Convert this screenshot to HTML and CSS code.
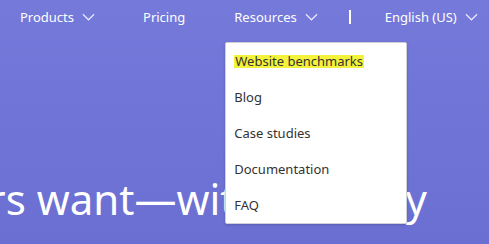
FILE: index.html
```html
<!DOCTYPE html>
<html>
<head>
<title>Resources</title>
<meta charset="UTF-8">
<meta name="viewport" content="width=device-width, initial-scale=1.0">
<link rel="stylesheet" href="styles.css">
</head>
<body>

<!-- *********************************************************
TOP NAV
********************************************************** -->

<div class="hero">
	<div class="nav">
		<div class="nav-item products">Products <svg class="chev" viewBox="0 0 14 8"><path d="M1 1l6 6 6-6"/></svg></div>
		<div class="nav-item pricing">Pricing</div>
		<div class="nav-item resources">
			Resources <svg class="chev" viewBox="0 0 14 8"><path d="M1 1l6 6 6-6"/></svg>
			<div class="menu">
				<div class="menu-item"><span class="marker">Website benchmarks</span></div>
				<div class="menu-item">Blog</div>
				<div class="menu-item">Case studies</div>
				<div class="menu-item">Documentation</div>
				<div class="menu-item">FAQ</div>
			</div>
		</div>
		<div class="sep"></div>
		<div class="nav-item lang">English (US) <svg class="chev" viewBox="0 0 14 8"><path d="M1 1l6 6 6-6"/></svg></div>
	</div>

	<h1 class="headline">what users want—with security</h1>
</div>

</body>
</html>
```

FILE: styles.css
```css
body{
	margin: 0px;
	font-family: "Noto Sans", "Open Sans", sans-serif;
	color: #333;
	overflow: hidden;
}

/*********************************************************
HERO
**********************************************************/

.hero{
	height: 244px;
	background: linear-gradient(180deg, #7479da 0%, #6b6fd2 100%);
	overflow: hidden;
}

.nav{
	display: flex;
	align-items: center;
	height: 34px;
	padding-left: 20px;
	color: #fff;
	font-size: 13px;
	line-height: 18px;
}

.nav-item{
	position: relative;
	display: flex;
	align-items: center;
	white-space: nowrap;
}

.chev{
	width: 13px;
	height: 8px;
	margin-left: 8px;
	fill: none;
	stroke: #e8e9fb;
	stroke-width: 1.3;
}

.pricing{ margin-left: 48px; }
.resources{ margin-left: 49px; }
.lang{ margin-left: 34px; }

.sep{
	width: 2px;
	height: 14px;
	background: #fff;
	margin-left: 31px;
}

/*********************************************************
DROPDOWN
**********************************************************/

.menu{
	position: absolute;
	top: 34px;
	left: -9px;
	width: 180px;
	background: #fff;
	border: 1px solid #d0d0d8;
	border-radius: 2px;
	box-shadow: 0px 1px 3px rgba(0, 0, 0, 0.18);
	z-index: 2;
}

.menu-item{
	height: 36px;
	line-height: 36px;
	padding-left: 8px;
	font-size: 13px;
	color: #333;
}

.marker{
	background: linear-gradient(180deg, transparent 14%, #f4f23a 14%, #f4f23a 90%, transparent 90%);
	padding: 0px 1px;
}

/*********************************************************
HEADLINE
**********************************************************/

.headline{
	margin: 0px;
	margin-top: 139px;
	margin-left: -190px;
	font-weight: 400;
	font-size: 42px;
	line-height: 52px;
	color: #fff;
	white-space: nowrap;
}
```
